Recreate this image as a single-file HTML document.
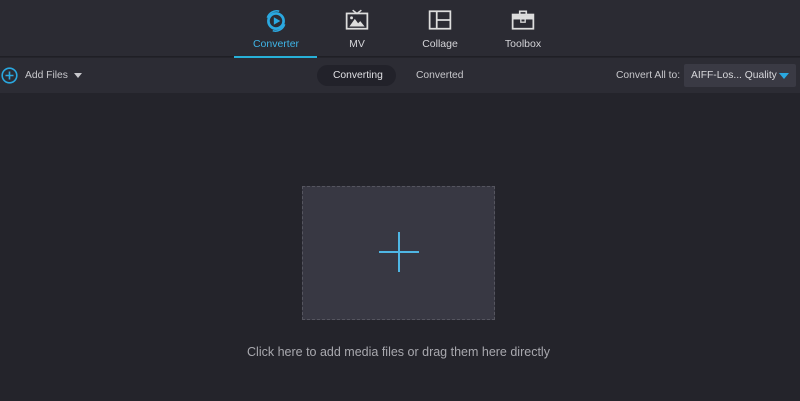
<!DOCTYPE html>
<html><head><style>
*{margin:0;padding:0;box-sizing:border-box}
body{width:800px;height:401px;background:#24242b;font-family:"Liberation Sans",sans-serif;position:relative;overflow:hidden}
.top{position:absolute;left:0;top:0;width:800px;height:57px;background:#2b2b33;border-bottom:1px solid #1f1f25}
.tab{position:absolute;top:0;width:84px;height:57px;text-align:center;color:#d4d4d8;font-size:10.5px}
.tab svg{position:absolute;left:30px;top:8px}
.tab span{position:absolute;left:0;right:0;top:38px}
.bar{position:absolute;left:0;top:58px;width:800px;height:35px;background:#2c2c34}
.t{position:absolute;font-size:10.3px;color:#c8c8cc;top:12px}
</style></head><body>
<div class="top">
<div class="tab" style="left:234px;color:#3fb4e6">
<svg width="24" height="26" viewBox="0 0 22 24"><circle cx="11" cy="12" r="7" fill="none" stroke="#2aa8e0" stroke-width="2.5"/><path d="M9 8.5L15 12L9 15.5Z" fill="#2aa8e0"/><path d="M3 9A9 9 0 0 1 14 3" fill="none" stroke="#2aa8e0" stroke-width="1.5"/><path d="M19 15A9 9 0 0 1 8 21" fill="none" stroke="#2aa8e0" stroke-width="1.5"/></svg>
<span>Converter</span>
<div style="position:absolute;left:0;bottom:-1px;width:83px;height:2px;background:#27b0d8"></div></div>
<div class="tab" style="left:315px">
<svg width="24" height="24" viewBox="0 0 22 22"><path d="M7 2L11 5L15 2" fill="none" stroke="#ddd" stroke-width="1.3"/><rect x="1.5" y="5" width="19" height="14" fill="none" stroke="#ddd" stroke-width="1.6"/><path d="M4 17L9 10L12 14L14 12L18 17Z" fill="#ddd"/><circle cx="6" cy="9" r="1.3" fill="#ddd"/></svg>
<span>MV</span></div>
<div class="tab" style="left:398px">
<svg width="24" height="24" viewBox="0 0 22 22"><rect x="1.5" y="3" width="19" height="16" fill="none" stroke="#ddd" stroke-width="1.6"/><path d="M8 3V19M8 11H20.5" stroke="#ddd" stroke-width="1.6"/></svg>
<span>Collage</span></div>
<div class="tab" style="left:481px">
<svg width="24" height="24" viewBox="0 0 22 22"><path d="M8 6V3H14V6" fill="none" stroke="#ddd" stroke-width="1.5"/><rect x="1.5" y="6" width="19" height="13" fill="none" stroke="#ddd" stroke-width="1.6"/><rect x="2" y="6.5" width="18" height="4" fill="#ddd"/><rect x="9" y="10" width="4" height="3" fill="#2b2b33" stroke="#ddd" stroke-width="1.2"/></svg>
<span>Toolbox</span></div>
</div>
<div class="bar">
<svg style="position:absolute;left:1px;top:9px" width="17" height="17" viewBox="0 0 17 17"><circle cx="8.5" cy="8.5" r="7.3" fill="none" stroke="#2aa8e0" stroke-width="1.6"/><path d="M8.5 4.5V12.5M4.5 8.5H12.5" stroke="#2aa8e0" stroke-width="1.6"/></svg>
<div class="t" style="left:25px">Add Files</div>
<div style="position:absolute;left:74px;top:15px;border-left:4px solid transparent;border-right:4px solid transparent;border-top:5px solid #c8c8cc"></div>
<div style="position:absolute;left:317px;top:7px;width:79px;height:21px;border-radius:11px;background:#22222a"></div>
<div class="t" style="left:333px;color:#e0e0e4">Converting</div>
<div class="t" style="left:416px">Converted</div>
<div class="t" style="left:616px">Convert All to:</div>
<div style="position:absolute;left:684px;top:6px;width:112px;height:23px;background:#3a3a44;border-radius:2px"></div>
<div class="t" style="left:691px;color:#d8d8dc">AIFF-Los... Quality</div>
<div style="position:absolute;left:779px;top:15px;border-left:5px solid transparent;border-right:5px solid transparent;border-top:6px solid #2aa8e0"></div>
</div>
<div style="position:absolute;left:302px;top:186px;width:193px;height:134px;background:#383843;border:1px dashed #55555f"></div>
<div style="position:absolute;left:379px;top:251px;width:40px;height:2px;background:#4fb6e4"></div>
<div style="position:absolute;left:398px;top:232px;width:2px;height:40px;background:#4fb6e4"></div>
<div style="position:absolute;left:0;width:800px;top:345px;text-align:center;font-size:12.5px;color:#a8a8ae;padding-right:3px">Click here to add media files or drag them here directly</div>
</body></html>
